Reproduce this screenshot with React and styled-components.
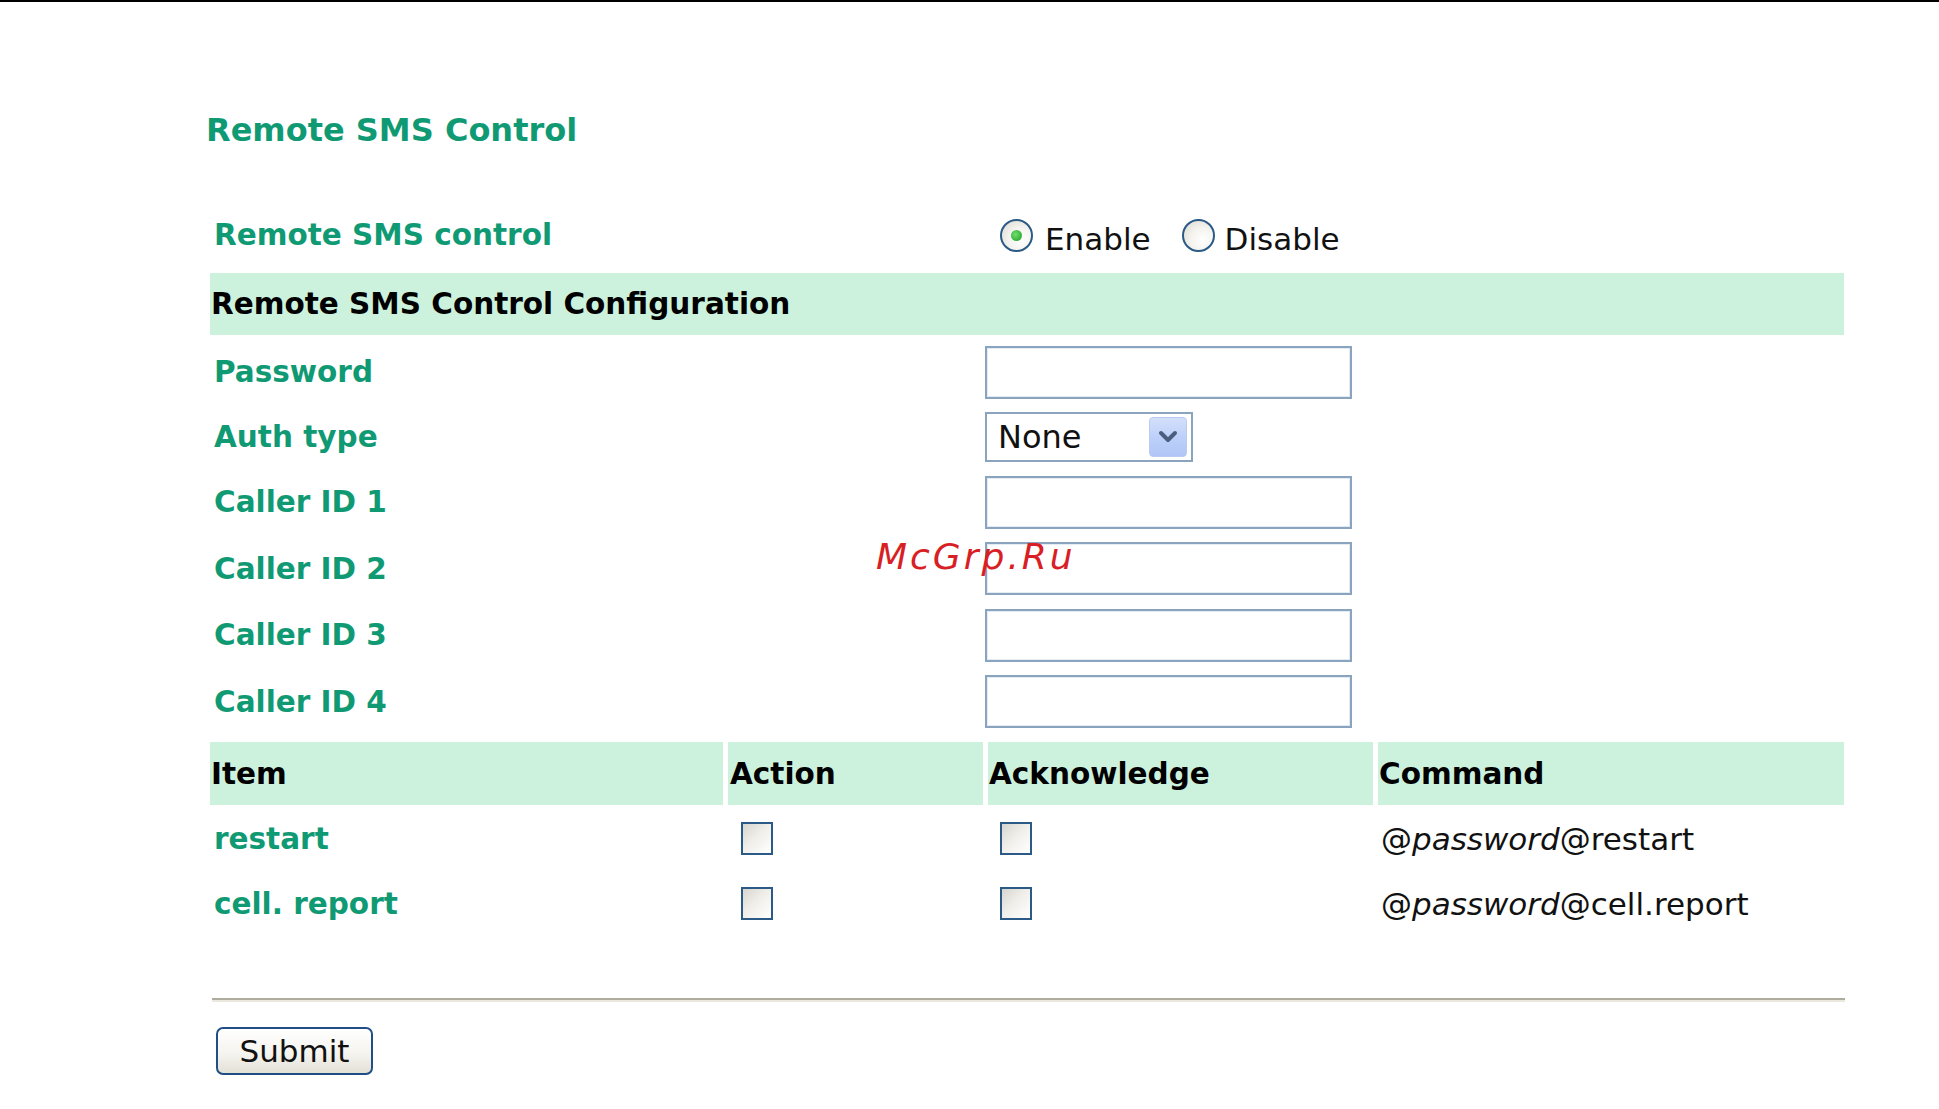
import React from "react";
import styled, { createGlobalStyle } from "styled-components";

const GlobalStyle = createGlobalStyle`
  html, body { margin: 0; padding: 0; background: #ffffff; }
  body { font-family: "DejaVu Sans", Verdana, sans-serif; }
`;

const Page = styled.div`
  position: relative;
  min-height: 1109px;
  box-sizing: border-box;
  border-top: 2px solid #000;
  padding: 108px 0 0 206px;
`;

const Title = styled.h1`
  margin: 0 0 53px 0;
  font-size: 32px;
  line-height: 40px;
  font-weight: bold;
  color: #109a74;
`;

const Form = styled.div`
  margin-left: 4px;
  width: 1634px;
  display: flex;
  flex-direction: column;
`;

const FieldRow = styled.div`
  display: grid;
  grid-template-columns: 775px 1fr;
  align-items: center;
  box-sizing: border-box;
  height: ${(p) => p.$h}px;
  padding-top: ${(p) => p.$pt || 0}px;
  margin-bottom: ${(p) => p.$mb || 0}px;
`;

const Label = styled.div`
  padding-left: 4px;
  font-size: 29.5px;
  font-weight: bold;
  color: #109a74;
  white-space: nowrap;
`;

const Band = styled.div`
  height: 62px;
  display: flex;
  align-items: center;
  background: #ccf2de;
  padding-left: 1px;
  font-size: 29.5px;
  font-weight: bold;
  color: #000;
`;

const RadioGroup = styled.div`
  display: flex;
  align-items: center;
  padding-left: 15px;
  gap: 31px;
`;

const RadioOption = styled.label`
  display: flex;
  align-items: center;
  gap: ${(p) => p.$gap}px;
`;

const RadioCircle = styled.span`
  width: 33px;
  height: 33px;
  box-sizing: border-box;
  border-radius: 50%;
  border: 2px solid #2b5a86;
  background: radial-gradient(circle at 65% 65%, #ffffff 0%, #f4f3ef 45%, #d8d7d0 100%);
  display: flex;
  align-items: center;
  justify-content: center;
  &::after {
    content: "";
    display: ${(p) => (p.$checked ? "block" : "none")};
    width: 11px;
    height: 11px;
    border-radius: 50%;
    background: radial-gradient(circle at 40% 40%, #6ee06e, #1f9a1f);
  }
`;

const PlainText = styled.span`
  font-size: 31px;
  color: #111;
  padding-top: ${(p) => p.$pt || 0}px;
  white-space: nowrap;
`;

const TextInput = styled.div`
  width: 367px;
  height: 53px;
  box-sizing: border-box;
  border: 2px solid #8aa3bf;
  box-shadow: inset 0 0 0 1px #e4ebf3;
  background: #fff;
`;

const Select = styled.div`
  width: 208px;
  height: 50px;
  box-sizing: border-box;
  border: 2px solid #8aa3bf;
  background: #fff;
  display: flex;
  align-items: center;
  justify-content: space-between;
  padding: 0 4px 0 11px;
`;

const SelectValue = styled.span`
  font-size: 32px;
  color: #111;
`;

const DropButton = styled.span`
  width: 38px;
  height: 40px;
  box-sizing: border-box;
  border-radius: 4px;
  border: 1px solid #b9cbef;
  background: linear-gradient(180deg, #d3e0fb 0%, #bccffa 55%, #b1c6f6 100%);
  display: flex;
  align-items: center;
  justify-content: center;
`;

const Table = styled.div`
  margin-top: 7px;
  display: grid;
  grid-template-columns: 513px 255px 385px 466px;
  column-gap: 5px;
`;

const HeadCell = styled.div`
  height: 63px;
  display: flex;
  align-items: center;
  background: #ccf2de;
  padding-left: ${(p) => p.$pl || 1}px;
  font-size: 29.5px;
  font-weight: bold;
  color: #000;
`;

const Cell = styled.div`
  height: ${(p) => p.$h}px;
  display: flex;
  align-items: center;
  padding-left: ${(p) => p.$pl || 0}px;
`;

const ItemLabel = styled.span`
  padding-left: 4px;
  font-size: 29.5px;
  font-weight: bold;
  color: #109a74;
`;

const Checkbox = styled.span`
  width: 32px;
  height: 33px;
  box-sizing: border-box;
  border: 2px solid #2b5a86;
  background: linear-gradient(135deg, #d6d5cf 0%, #efeee9 45%, #ffffff 100%);
`;

const Command = styled.span`
  font-size: 31px;
  color: #111;
  white-space: nowrap;
  em { font-style: italic; }
`;

const Rule = styled.div`
  margin: 63px 0 0 2px;
  width: 1633px;
  height: 0;
  border-top: 2px solid #aeac9f;
  border-bottom: 2px solid #ebe9de;
`;

const SubmitButton = styled.button`
  margin: 25px 0 0 6px;
  width: 157px;
  height: 48px;
  box-sizing: border-box;
  border: 2px solid #1f4f86;
  border-radius: 7px;
  background: linear-gradient(180deg, #ffffff 0%, #f5f4ef 55%, #e3e0d6 100%);
  font-family: "DejaVu Sans", Verdana, sans-serif;
  font-size: 31px;
  color: #111;
  padding: 0;
  align-self: flex-start;
`;

const Watermark = styled.div`
  position: absolute;
  left: 876px;
  top: 533px;
  font-size: 36px;
  font-style: italic;
  letter-spacing: 3px;
  color: #d91f26;
  line-height: 44px;
  pointer-events: none;
`;

const Chevron = () => (
  <svg width="20" height="14" viewBox="0 0 20 14">
    <polyline points="3,3 10,10 17,3" fill="none" stroke="#4a5e80" strokeWidth="4" strokeLinecap="round" strokeLinejoin="round" />
  </svg>
);

const fields = [
  { label: "Caller ID 1", h: 66 },
  { label: "Caller ID 2", h: 67 },
  { label: "Caller ID 3", h: 66 },
  { label: "Caller ID 4", h: 67 },
];

const items = [
  { name: "restart", cmd: "restart", h: 67 },
  { name: "cell. report", cmd: "cell.report", h: 63 },
];

export default function App() {
  return (
    <>
      <GlobalStyle />
      <Page>
        <Title>Remote SMS Control</Title>
        <Form>
          <FieldRow $h={64} $mb={6}>
            <Label>Remote SMS control</Label>
            <RadioGroup>
              <RadioOption $gap={12}>
                <RadioCircle $checked />
                <PlainText $pt={8}>Enable</PlainText>
              </RadioOption>
              <RadioOption $gap={10}>
                <RadioCircle />
                <PlainText $pt={8}>Disable</PlainText>
              </RadioOption>
            </RadioGroup>
          </FieldRow>
          <Band>Remote SMS Control Configuration</Band>
          <FieldRow $h={69} $pt={5}>
            <Label>Password</Label>
            <TextInput />
          </FieldRow>
          <FieldRow $h={65}>
            <Label>Auth type</Label>
            <Select>
              <SelectValue>None</SelectValue>
              <DropButton>
                <Chevron />
              </DropButton>
            </Select>
          </FieldRow>
          {fields.map((f) => (
            <FieldRow key={f.label} $h={f.h}>
              <Label>{f.label}</Label>
              <TextInput />
            </FieldRow>
          ))}
          <Table>
            <HeadCell>Item</HeadCell>
            <HeadCell $pl={2}>Action</HeadCell>
            <HeadCell>Acknowledge</HeadCell>
            <HeadCell>Command</HeadCell>
            {items.map((it) => (
              <React.Fragment key={it.name}>
                <Cell $h={it.h}>
                  <ItemLabel>{it.name}</ItemLabel>
                </Cell>
                <Cell $h={it.h} $pl={13}>
                  <Checkbox />
                </Cell>
                <Cell $h={it.h} $pl={12}>
                  <Checkbox />
                </Cell>
                <Cell $h={it.h} $pl={3}>
                  <Command>
                    @<em>password</em>@{it.cmd}
                  </Command>
                </Cell>
              </React.Fragment>
            ))}
          </Table>
          <Rule />
          <SubmitButton>Submit</SubmitButton>
        </Form>
        <Watermark>McGrp.Ru</Watermark>
      </Page>
    </>
  );
}
